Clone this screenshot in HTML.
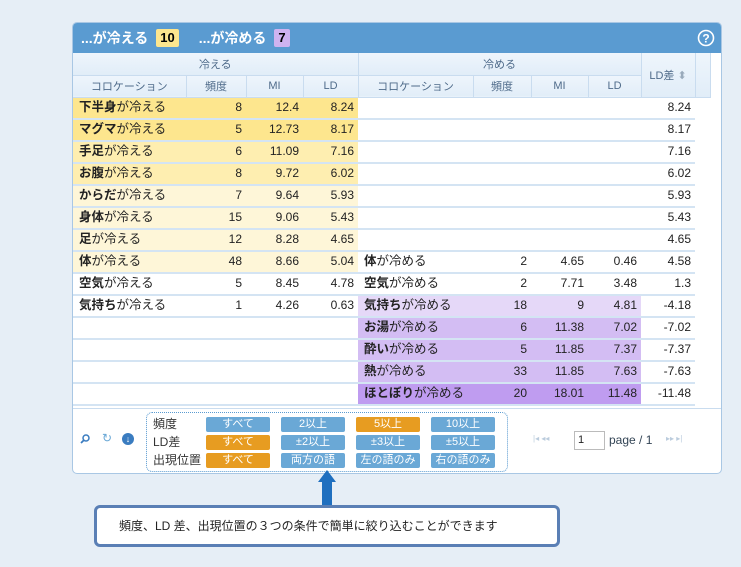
<!DOCTYPE html>
<html><head><meta charset="utf-8"><style>
*{margin:0;padding:0;box-sizing:border-box}
body{width:741px;height:567px;background:#e6eef6;font-family:"Liberation Sans","Noto Sans CJK JP",sans-serif;position:relative;overflow:hidden;color:#222}
#panel{position:absolute;left:72px;top:22px;width:650px;height:452px;background:#fff;border:1px solid #a9c7e4;border-radius:5px;overflow:hidden}
#hdr{height:30px;background:#5a9bd1;color:#fff;font-weight:bold;font-size:14px;display:flex;align-items:center;padding-left:8px}
.b{display:inline-block;color:#000;padding:0 4px;height:18px;line-height:18px;border-radius:2px;margin-left:8px;font-size:13px}
table{border-collapse:collapse;position:absolute;left:0;top:30px;font-size:12px;table-layout:fixed}
th{font-weight:normal;color:#4f6b8a;font-size:11px;background:linear-gradient(#eef5fc,#e1edf8);border-right:1px solid #c9dcef;border-bottom:1px solid #c9dcef;height:22px}
td{height:22px;border-bottom:2px solid #d4e4f3;text-align:right;padding-right:4px;white-space:nowrap;line-height:18px;padding-bottom:2px}
td.c{text-align:left;padding-left:6px;font-size:12.5px}
td.c b{font-weight:bold}
.y1{background:#fde68e}.y2{background:#feeeb0}.y3{background:#fef6d8}
.p1{background:#e5d8f8}.p2{background:#d3bdf3}.p3{background:#bf9cf0}
#tool{position:absolute;left:0;top:385px;width:650px;height:66px;border-top:1px solid #c9dcef}
#filt{position:absolute;left:73px;top:3px;width:362px;height:60px;border:1px dotted #5a9bd1;border-radius:6px;font-size:12px}
.lab{position:absolute;left:6px;color:#333;line-height:15px}
.btn{position:absolute;width:64px;height:15px;line-height:15px;text-align:center;color:#fff;font-size:11px;background:#6aa8d6;border-radius:2px}
.o{background:#e79c21}
#call{position:absolute;left:94px;top:505px;width:466px;height:42px;border:3px solid #5a7fb5;border-radius:6px;background:#fff;font-size:12px;line-height:36px;padding-left:22px;color:#222}
</style></head><body>
<div id="panel">
<div id="hdr">...が冷える<span class="b" style="background:#fde68e">10</span><span style="margin-left:20px">...が冷める</span><span class="b" style="background:#cfb3f0">7</span>
<svg style="position:absolute;right:6px;top:6px" width="18" height="18" viewBox="0 0 18 18"><circle cx="9" cy="9" r="7.5" fill="none" stroke="#fff" stroke-width="1.6"/><text x="9" y="13.5" text-anchor="middle" fill="#fff" font-size="12" font-weight="bold" font-family="Liberation Sans">?</text></svg></div>
<table>
<colgroup><col width="113"><col width="60"><col width="57"><col width="55"><col width="115"><col width="58"><col width="57"><col width="53"><col width="54"><col width="15"></colgroup>
<tr><th colspan="4">冷える</th><th colspan="4">冷める</th><th rowspan="2">LD差 <span style="color:#9ab">⬍</span></th><th rowspan="2"></th></tr>
<tr><th>コロケーション</th><th>頻度</th><th>MI</th><th>LD</th><th>コロケーション</th><th>頻度</th><th>MI</th><th>LD</th></tr>
<tr><td class="c y1"><b>下半身</b>が冷える</td><td class="y1">8</td><td class="y1">12.4</td><td class="y1">8.24</td><td></td><td></td><td></td><td></td><td>8.24</td><td style="border:0"></td></tr>
<tr><td class="c y1"><b>マグマ</b>が冷える</td><td class="y1">5</td><td class="y1">12.73</td><td class="y1">8.17</td><td></td><td></td><td></td><td></td><td>8.17</td><td style="border:0"></td></tr>
<tr><td class="c y2"><b>手足</b>が冷える</td><td class="y2">6</td><td class="y2">11.09</td><td class="y2">7.16</td><td></td><td></td><td></td><td></td><td>7.16</td><td style="border:0"></td></tr>
<tr><td class="c y2"><b>お腹</b>が冷える</td><td class="y2">8</td><td class="y2">9.72</td><td class="y2">6.02</td><td></td><td></td><td></td><td></td><td>6.02</td><td style="border:0"></td></tr>
<tr><td class="c y3"><b>からだ</b>が冷える</td><td class="y3">7</td><td class="y3">9.64</td><td class="y3">5.93</td><td></td><td></td><td></td><td></td><td>5.93</td><td style="border:0"></td></tr>
<tr><td class="c y3"><b>身体</b>が冷える</td><td class="y3">15</td><td class="y3">9.06</td><td class="y3">5.43</td><td></td><td></td><td></td><td></td><td>5.43</td><td style="border:0"></td></tr>
<tr><td class="c y3"><b>足</b>が冷える</td><td class="y3">12</td><td class="y3">8.28</td><td class="y3">4.65</td><td></td><td></td><td></td><td></td><td>4.65</td><td style="border:0"></td></tr>
<tr><td class="c y3"><b>体</b>が冷える</td><td class="y3">48</td><td class="y3">8.66</td><td class="y3">5.04</td><td class="c"><b>体</b>が冷める</td><td>2</td><td>4.65</td><td>0.46</td><td>4.58</td><td style="border:0"></td></tr>
<tr><td class="c"><b>空気</b>が冷える</td><td>5</td><td>8.45</td><td>4.78</td><td class="c"><b>空気</b>が冷める</td><td>2</td><td>7.71</td><td>3.48</td><td>1.3</td><td style="border:0"></td></tr>
<tr><td class="c"><b>気持ち</b>が冷える</td><td>1</td><td>4.26</td><td>0.63</td><td class="c p1"><b>気持ち</b>が冷める</td><td class="p1">18</td><td class="p1">9</td><td class="p1">4.81</td><td>-4.18</td><td style="border:0"></td></tr>
<tr><td></td><td></td><td></td><td></td><td class="c p2"><b>お湯</b>が冷める</td><td class="p2">6</td><td class="p2">11.38</td><td class="p2">7.02</td><td>-7.02</td><td style="border:0"></td></tr>
<tr><td></td><td></td><td></td><td></td><td class="c p2"><b>酔い</b>が冷める</td><td class="p2">5</td><td class="p2">11.85</td><td class="p2">7.37</td><td>-7.37</td><td style="border:0"></td></tr>
<tr><td></td><td></td><td></td><td></td><td class="c p2"><b>熱</b>が冷める</td><td class="p2">33</td><td class="p2">11.85</td><td class="p2">7.63</td><td>-7.63</td><td style="border:0"></td></tr>
<tr><td></td><td></td><td></td><td></td><td class="c p3"><b>ほとぼり</b>が冷める</td><td class="p3">20</td><td class="p3">18.01</td><td class="p3">11.48</td><td>-11.48</td><td style="border:0"></td></tr>
</table>
<div id="tool">
<svg style="position:absolute;left:7px;top:25px" width="10" height="10" viewBox="0 0 10 10"><circle cx="6" cy="4" r="3" fill="none" stroke="#3a7cc0" stroke-width="1.5"/><line x1="4" y1="6" x2="1" y2="9" stroke="#3a7cc0" stroke-width="1.8"/></svg>
<div style="position:absolute;left:29px;top:22px;font-size:12px;color:#6aa8d6">↻</div>
<div style="position:absolute;left:49px;top:24px;width:12px;height:12px;border-radius:50%;background:#3a7cc0;color:#fff;font-size:9px;line-height:12px;text-align:center;font-weight:bold">↓</div>
<div id="filt">
<div class="lab" style="top:4px">頻度</div><div class="lab" style="top:22px">LD差</div><div class="lab" style="top:40px">出現位置</div>
<div class="btn" style="left:59px;top:4px">すべて</div><div class="btn" style="left:134px;top:4px">2以上</div><div class="btn o" style="left:209px;top:4px">5以上</div><div class="btn" style="left:284px;top:4px">10以上</div>
<div class="btn o" style="left:59px;top:22px">すべて</div><div class="btn" style="left:134px;top:22px">±2以上</div><div class="btn" style="left:209px;top:22px">±3以上</div><div class="btn" style="left:284px;top:22px">±5以上</div>
<div class="btn o" style="left:59px;top:40px">すべて</div><div class="btn" style="left:134px;top:40px">両方の語</div><div class="btn" style="left:209px;top:40px">左の語のみ</div><div class="btn" style="left:284px;top:40px">右の語のみ</div>
</div>
<div style="position:absolute;left:460px;top:25px;font-size:8px;color:#bcd">|◂ ◂◂</div>
<div style="position:absolute;left:501px;top:22px;width:31px;height:19px;border:1px solid #bbb;font-size:11px;padding-left:3px;line-height:17px">1</div>
<div style="position:absolute;left:536px;top:24px;font-size:12px;color:#345">page / 1</div>
<div style="position:absolute;left:593px;top:25px;font-size:8px;color:#bcd">▸▸ ▸|</div>
</div>
</div>
<div style="position:absolute;left:318px;top:470px;width:0;height:0;border-left:9px solid transparent;border-right:9px solid transparent;border-bottom:12px solid #1f6fbf"></div>
<div style="position:absolute;left:322px;top:481px;width:10px;height:25px;background:#1f6fbf"></div>
<div id="call">頻度、LD 差、出現位置の３つの条件で簡単に絞り込むことができます</div>
</body></html>
